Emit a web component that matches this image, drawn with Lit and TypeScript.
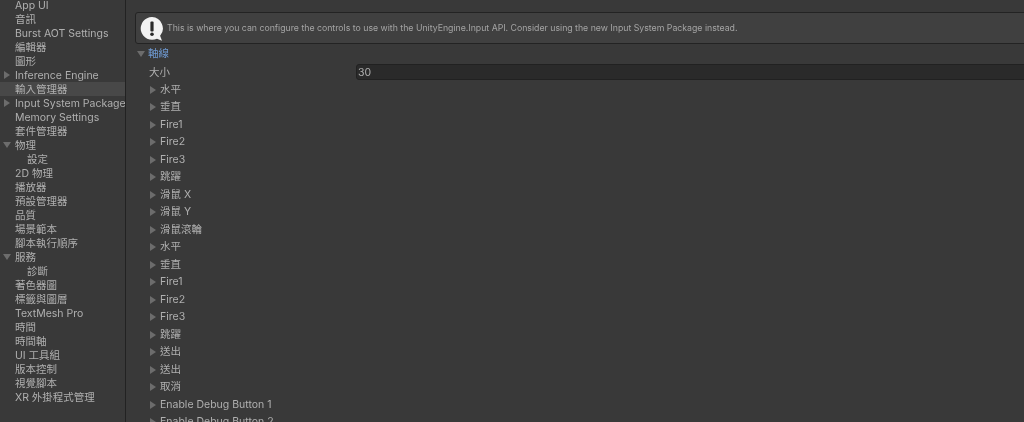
import { html, LitElement, css } from "lit";
import { customElement } from "lit/decorators.js";
import { classMap } from "lit/directives/class-map.js";

type NavItem = { label: string; arrow?: "right" | "down"; sub?: boolean; selected?: boolean };

const NAV: NavItem[] = [
  { label: "App UI" },
  { label: "音訊" },
  { label: "Burst AOT Settings" },
  { label: "編輯器" },
  { label: "圖形" },
  { label: "Inference Engine", arrow: "right" },
  { label: "輸入管理器", selected: true },
  { label: "Input System Package", arrow: "right" },
  { label: "Memory Settings" },
  { label: "套件管理器" },
  { label: "物理", arrow: "down" },
  { label: "設定", sub: true },
  { label: "2D 物理" },
  { label: "播放器" },
  { label: "預設管理器" },
  { label: "品質" },
  { label: "場景範本" },
  { label: "腳本執行順序" },
  { label: "服務", arrow: "down" },
  { label: "診斷", sub: true },
  { label: "著色器圖" },
  { label: "標籤與圖層" },
  { label: "TextMesh Pro" },
  { label: "時間" },
  { label: "時間軸" },
  { label: "UI 工具組" },
  { label: "版本控制" },
  { label: "視覺腳本" },
  { label: "XR 外掛程式管理" },
];

const AXES = [
  "水平", "垂直", "Fire1", "Fire2", "Fire3", "跳躍", "滑鼠 X", "滑鼠 Y", "滑鼠滾輪",
  "水平", "垂直", "Fire1", "Fire2", "Fire3", "跳躍", "送出", "送出", "取消",
  "Enable Debug Button 1", "Enable Debug Button 2",
];

@customElement("app-root")
export default class AppRoot extends LitElement {
  static styles = css`
    :host {
      display: flex;
      width: 1024px;
      height: 422px;
      overflow: hidden;
      background: #393939;
      color: #b0b0b0;
      font-family: Inter, "Noto Sans CJK TC", sans-serif;
      font-size: 10.5px;
      filter: blur(0.35px);
    }

    .nav {
      flex: none;
      width: 125px;
      height: 422px;
      border-right: 1px solid #222;
      overflow: hidden;
      white-space: nowrap;
    }

    .nav-list {
      margin-top: -2px;
    }

    .nav-row {
      position: relative;
      height: 14px;
      line-height: 15px;
      padding-left: 15px;
    }

    .nav-row.sub {
      padding-left: 27px;
    }

    .nav-row.selected {
      background: #484848;
    }

    .arrow {
      position: absolute;
      width: 0;
      height: 0;
    }

    .arrow.right {
      border-top: 4px solid transparent;
      border-bottom: 4px solid transparent;
      border-left: 6px solid #6c6c6c;
    }

    .arrow.down {
      border-left: 4px solid transparent;
      border-right: 4px solid transparent;
      border-top: 6px solid #6c6c6c;
    }

    .nav-row .arrow.right {
      left: 4px;
      top: 3px;
    }

    .nav-row .arrow.down {
      left: 3px;
      top: 4px;
    }

    .main {
      flex: 1;
      min-width: 0;
      padding: 12px 0 0 9px;
      overflow: hidden;
      white-space: nowrap;
    }

    .help {
      display: flex;
      align-items: center;
      gap: 3px;
      height: 32px;
      box-sizing: border-box;
      padding-left: 4px;
      margin-right: -4px;
      background: #404040;
      border: 1px solid #232323;
      border-radius: 3px;
      font-size: 8.74px;
      color: #a4a4a4;
    }

    .help svg {
      flex: none;
    }

    .foldout {
      position: relative;
      height: 18px;
      line-height: 18px;
      margin-top: 1px;
      padding-left: 13px;
      color: #6f9bd4;
    }

    .foldout .arrow {
      left: 2px;
      top: 6px;
    }

    .size {
      display: flex;
      align-items: center;
      height: 17px;
      padding-left: 14px;
      margin-bottom: 0.5px;
    }

    .size-label {
      width: 207px;
      flex: none;
    }

    .size-input {
      flex: 1;
      box-sizing: border-box;
      height: 16px;
      line-height: 15px;
      padding-left: 1px;
      margin-right: -4px;
      background: #2a2a2a;
      border: 1px solid #212121;
      border-radius: 3px;
    }

    .axis {
      position: relative;
      height: 17.5px;
      line-height: 17.5px;
      padding-left: 25px;
    }

    .axis .arrow {
      left: 15px;
      top: 5px;
    }
  `;

  render() {
    return html`
      <nav class="nav">
        <div class="nav-list">
          ${NAV.map(
            (item) => html`
              <div class=${classMap({ "nav-row": true, sub: !!item.sub, selected: !!item.selected })}>
                ${item.arrow ? html`<span class="arrow ${item.arrow}"></span>` : ""}${item.label}
              </div>
            `,
          )}
        </div>
      </nav>
      <main class="main">
        <div class="help">
          <svg width="24" height="25" viewBox="0 0 24 25">
            <path d="M12 1a11.4 11.4 0 1 0 5 21.7l5 2.1-1.9-5A11.4 11.4 0 0 0 12 1z" fill="#f2f2f2" />
            <rect x="10.4" y="5.5" width="3.2" height="10" rx="1" fill="#2a2a2a" />
            <circle cx="12" cy="18.2" r="1.8" fill="#2a2a2a" />
          </svg>
          <span>This is where you can configure the controls to use with the UnityEngine.Input API. Consider using the new Input System Package instead.</span>
        </div>
        <div class="foldout"><span class="arrow down"></span>軸線</div>
        <div class="size">
          <span class="size-label">大小</span>
          <div class="size-input">30</div>
        </div>
        ${AXES.map((name) => html`<div class="axis"><span class="arrow right"></span>${name}</div>`)}
      </main>
    `;
  }
}

declare global {
  interface HTMLElementTagNameMap {
    "app-root": AppRoot;
  }
}
